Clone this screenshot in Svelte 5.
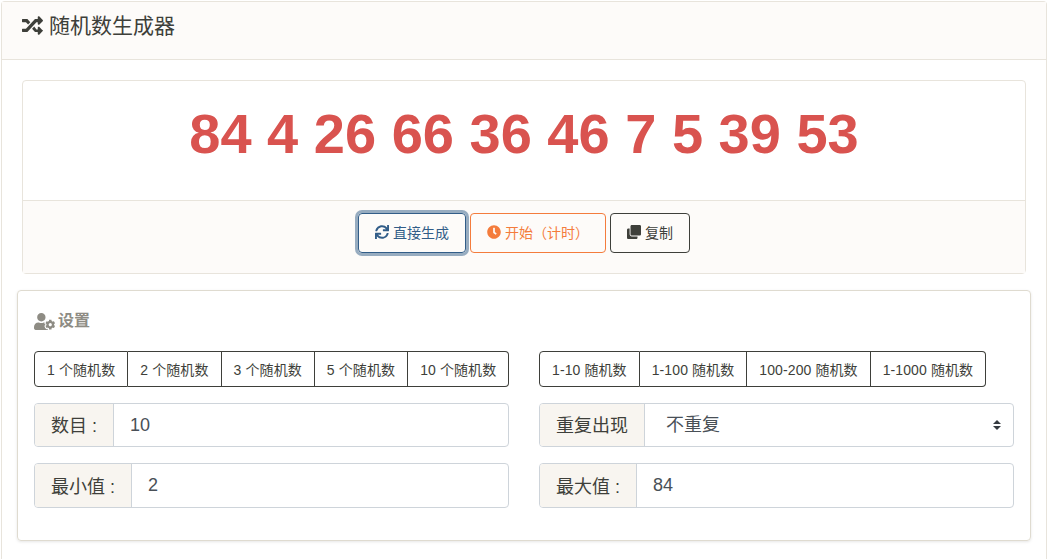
<script>
	const countOptions = ['1 个随机数', '2 个随机数', '3 个随机数', '5 个随机数', '10 个随机数'];
	const rangeOptions = ['1-10 随机数', '1-100 随机数', '100-200 随机数', '1-1000 随机数'];
	const result = '84 4 26 66 36 46 7 5 39 53';
</script>

<div class="page">
	<div class="card">
		<div class="card-header">
			<svg class="icon" viewBox="0 0 512 512"><path d="M504.971 359.029c9.373 9.373 9.373 24.569 0 33.941l-80 79.984c-15.01 15.01-40.971 4.49-40.971-16.971V416h-58.785a12.004 12.004 0 0 1-8.773-3.812l-70.556-75.596 53.333-57.143L352 352h32v-39.981c0-21.438 25.943-31.998 40.971-16.971l80 79.981zM12 176h84l52.781 56.551 53.333-57.143-70.556-75.596A11.999 11.999 0 0 0 122.785 96H12c-6.627 0-12 5.373-12 12v56c0 6.627 5.373 12 12 12zm372 0v39.984c0 21.46 25.961 31.98 40.971 16.971l80-79.984c9.373-9.373 9.373-24.569 0-33.941l-80-79.981C409.943 24.021 384 34.582 384 56.019V96h-58.785a12.004 12.004 0 0 0-8.773 3.812L96 336H12c-6.627 0-12 5.373-12 12v56c0 6.627 5.373 12 12 12h110.785c3.326 0 6.503-1.381 8.773-3.812L352 176h32z"/></svg>
			<span>随机数生成器</span>
		</div>
		<div class="card-body">
			<div class="result-card">
				<div class="result">{result}</div>
				<div class="actions">
					<button class="btn primary">
						<svg viewBox="0 0 512 512"><path d="M440.65 12.57l4 82.77A247.16 247.16 0 0 0 255.83 8C134.73 8 33.91 94.92 12.29 209.82A12 12 0 0 0 24.09 224h49.05a12 12 0 0 0 11.67-9.26 175.91 175.91 0 0 1 317-56.94l-101.46-4.86a12 12 0 0 0-12.57 12v47.41a12 12 0 0 0 12 12H500a12 12 0 0 0 12-12V12a12 12 0 0 0-12-12h-47.37a12 12 0 0 0-11.98 12.57zM255.83 432a175.61 175.61 0 0 1-146-77.8l101.8 4.87a12 12 0 0 0 12.57-12v-47.4a12 12 0 0 0-12-12H12a12 12 0 0 0-12 12V500a12 12 0 0 0 12 12h47.35a12 12 0 0 0 12-12.6l-4.15-82.57A247.17 247.17 0 0 0 255.83 504c121.11 0 221.93-86.92 243.55-201.82a12 12 0 0 0-11.8-14.18h-49.05a12 12 0 0 0-11.67 9.26A175.86 175.86 0 0 1 255.83 432z"/></svg>
						直接生成
					</button>
					<button class="btn warning">
						<svg viewBox="0 0 512 512"><path d="M256,8C119,8,8,119,8,256S119,504,256,504,504,393,504,256,393,8,256,8Zm92.49,313h0l-20,25a16,16,0,0,1-22.49,2.5h0l-67-49.72a40,40,0,0,1-15-31.23V112a16,16,0,0,1,16-16h32a16,16,0,0,1,16,16V256l58,42.5A16,16,0,0,1,348.49,321Z"/></svg>
						开始（计时）
					</button>
					<button class="btn dark">
						<svg viewBox="0 0 512 512"><path d="M464 0c26.51 0 48 21.49 48 48v288c0 26.51-21.49 48-48 48H176c-26.51 0-48-21.49-48-48V48c0-26.51 21.49-48 48-48h288M176 416c-44.112 0-80-35.888-80-80V128H48c-26.51 0-48 21.49-48 48v288c0 26.51 21.49 48 48 48h288c26.51 0 48-21.49 48-48v-48H176z"/></svg>
						复制
					</button>
				</div>
			</div>

			<div class="settings">
				<h2 class="settings-title">
					<svg viewBox="0 0 640 512"><path d="M610.5 373.3c2.6-14.1 2.6-28.5 0-42.6l25.8-14.9c3-1.7 4.3-5.2 3.3-8.5-6.7-21.6-18.2-41.2-33.2-57.4-2.3-2.5-6-3.1-9-1.4l-25.8 14.9c-10.9-9.3-23.4-16.5-36.9-21.3v-29.8c0-3.4-2.4-6.4-5.7-7.1-22.3-5-45-4.8-66.2 0-3.3.7-5.7 3.7-5.7 7.1v29.8c-13.5 4.8-26 12-36.9 21.3l-25.8-14.9c-2.9-1.7-6.7-1.1-9 1.4-15 16.2-26.5 35.8-33.2 57.4-1 3.3.4 6.8 3.3 8.5l25.8 14.9c-2.6 14.1-2.6 28.5 0 42.6l-25.8 14.9c-3 1.7-4.3 5.2-3.3 8.5 6.7 21.6 18.2 41.1 33.2 57.4 2.3 2.5 6 3.1 9 1.4l25.8-14.9c10.9 9.3 23.4 16.5 36.9 21.3v29.8c0 3.4 2.4 6.4 5.7 7.1 22.3 5 45 4.8 66.2 0 3.3-.7 5.7-3.7 5.7-7.1v-29.8c13.5-4.8 26-12 36.9-21.3l25.8 14.9c2.9 1.7 6.7 1.1 9-1.4 15-16.2 26.5-35.8 33.2-57.4 1-3.3-.4-6.8-3.3-8.5l-25.8-14.9zM496 400.5c-26.8 0-48.5-21.8-48.5-48.5s21.8-48.5 48.5-48.5 48.5 21.8 48.5 48.5-21.7 48.5-48.5 48.5zM224 256c70.7 0 128-57.3 128-128S294.7 0 224 0 96 57.3 96 128s57.3 128 128 128zm201.2 226.5c-2.3-1.2-4.6-2.6-6.8-3.9l-7.9 4.6c-6 3.4-12.8 5.3-19.6 5.3-10.9 0-21.4-4.6-28.9-12.6-18.3-19.8-32.3-43.9-40.2-69.6-5.5-17.7 1.9-36.4 17.9-45.7l7.9-4.6c-.1-2.6-.1-5.2 0-7.8l-7.9-4.6c-16-9.2-23.4-28-17.9-45.7.9-2.9 2.2-5.8 3.2-8.7-3.8-.3-7.5-1.2-11.4-1.2h-16.7c-22.2 10.2-46.9 16-72.9 16s-50.6-5.8-72.9-16h-16.7C60.2 288 0 348.2 0 422.4V464c0 26.5 21.5 48 48 48h352c10.1 0 19.5-3.2 27.2-8.5-1.2-3.8-2-7.7-2-11.8v-9.2z"/></svg>
					设置
				</h2>
				<div class="grid">
					<div class="column">
						<div class="btn-group">
							{#each countOptions as option}
								<button>{option}</button>
							{/each}
						</div>
						<div class="input-group">
							<span class="addon">数目 :</span>
							<input type="text" value="10" />
						</div>
						<div class="input-group tall">
							<span class="addon">最小值 :</span>
							<input type="text" value="2" />
						</div>
					</div>
					<div class="column">
						<div class="btn-group">
							{#each rangeOptions as option}
								<button>{option}</button>
							{/each}
						</div>
						<div class="input-group">
							<span class="addon">重复出现</span>
							<div class="select-wrap">
								<select>
									<option>不重复</option>
									<option>可重复</option>
								</select>
								<svg class="caret" viewBox="0 0 8 10"><path d="M4 0 8 4H0zM4 10 0 6h8z"/></svg>
							</div>
						</div>
						<div class="input-group tall">
							<span class="addon">最大值 :</span>
							<input type="text" value="84" />
						</div>
					</div>
				</div>
			</div>
		</div>
	</div>
</div>

<style>
	:global(body) {
		background: #fff;
		font-family: "Liberation Sans", "Noto Sans CJK SC", sans-serif;
		color: #3e3f3a;
	}
	.page {
		padding: 1px 1px 0;
	}
	.card {
		border: 1px solid #e8e4dc;
		border-bottom: 0;
		border-radius: 4px 4px 0 0;
	}
	.card-header {
		height: 57px;
		box-sizing: content-box;
		display: flex;
		align-items: flex-start;
		gap: 6px;
		padding: 0 20px;
		background: #fdfbf9;
		border-bottom: 1px solid #e8e4dc;
		font-size: 21px;
	}
	.card-header span {
		line-height: 30px;
		margin-top: 9px;
	}
	.icon {
		width: 21px;
		height: 21px;
		margin-top: 13px;
		fill: #3e3f3a;
	}
	.card-body {
		padding: 20px 15px 18px;
	}
	.result-card {
		margin: 0 5px 16px;
		border: 1px solid #e8e4dc;
		border-radius: 4px;
	}
	.result {
		height: 119px;
		display: flex;
		align-items: center;
		justify-content: center;
		color: #d9534f;
		font-size: 56px;
		font-weight: 700;
		padding-bottom: 14px;
		box-sizing: border-box;
	}
	.actions {
		height: 73px;
		box-sizing: border-box;
		padding-top: 12px;
		display: flex;
		justify-content: center;
		gap: 4px;
		background: #fdfbf9;
		border-top: 1px solid #e8e4dc;
	}
	.btn {
		height: 40px;
		box-sizing: border-box;
		background: transparent;
		border: 1px solid;
		border-radius: 4px;
		font: inherit;
		font-size: 14px;
		display: flex;
		align-items: center;
		justify-content: center;
		gap: 4px;
		padding: 0 0 2px;
	}
	.btn svg {
		width: 14px;
		height: 14px;
		fill: currentColor;
	}
	.primary {
		width: 108px;
		color: #325d88;
		border-color: #325d88;
		box-shadow: 0 0 0 3px rgba(50, 93, 136, 0.5);
	}
	.warning {
		width: 136px;
		color: #f47c3c;
		border-color: #f47c3c;
	}
	.dark {
		width: 80px;
		color: #3e3f3a;
		border-color: #3e3f3a;
	}
	.settings {
		border: 1px solid #dfdbd0;
		border-radius: 4px;
		padding: 19px 16px 32px;
		box-shadow: 0 1px 3px rgba(0, 0, 0, 0.1);
	}
	.settings-title {
		margin: 0 0 19px;
		height: 22px;
		display: flex;
		align-items: center;
		gap: 3px;
		font-size: 16px;
		line-height: 22px;
		font-weight: 700;
		color: #8e8c84;
	}
	.settings-title svg {
		width: 21px;
		height: 17px;
		fill: #8e8c84;
	}
	.grid {
		display: grid;
		grid-template-columns: 475px 475px;
		column-gap: 30px;
	}
	.column {
		display: flex;
		flex-direction: column;
		align-items: stretch;
		gap: 16px;
	}
	.btn-group {
		display: flex;
		height: 36px;
	}
	.btn-group button {
		background: transparent;
		border: 1px solid #3e3f3a;
		border-left-width: 0;
		padding: 0 12px;
		font: inherit;
		font-size: 14px;
		letter-spacing: 0.1px;
		color: #3e3f3a;
		white-space: nowrap;
	}
	.btn-group button:first-child {
		border-left-width: 1px;
		border-radius: 4px 0 0 4px;
	}
	.btn-group button:last-child {
		border-radius: 0 4px 4px 0;
	}
	.input-group {
		display: flex;
		height: 44px;
		box-sizing: border-box;
		border: 1px solid #ced4da;
		border-radius: 4px;
		font-size: 18px;
		overflow: hidden;
	}
	.input-group.tall {
		height: 45px;
	}
	.addon {
		display: flex;
		align-items: center;
		padding: 0 16px 2px;
		background: #f8f5f0;
		border-right: 1px solid #ced4da;
		color: #3e3f3a;
		white-space: nowrap;
	}
	input,
	select {
		flex: 1;
		min-width: 0;
		width: 100%;
		height: 100%;
		box-sizing: border-box;
		border: 0;
		outline: 0;
		background: transparent;
		font: inherit;
		color: #495057;
		padding: 0 16px;
	}
	.select-wrap {
		flex: 1;
		position: relative;
	}
	select {
		appearance: none;
		padding: 0 21px;
	}
	.caret {
		position: absolute;
		right: 12px;
		top: 16px;
		width: 8px;
		height: 10px;
		fill: #343a40;
		pointer-events: none;
	}
</style>
